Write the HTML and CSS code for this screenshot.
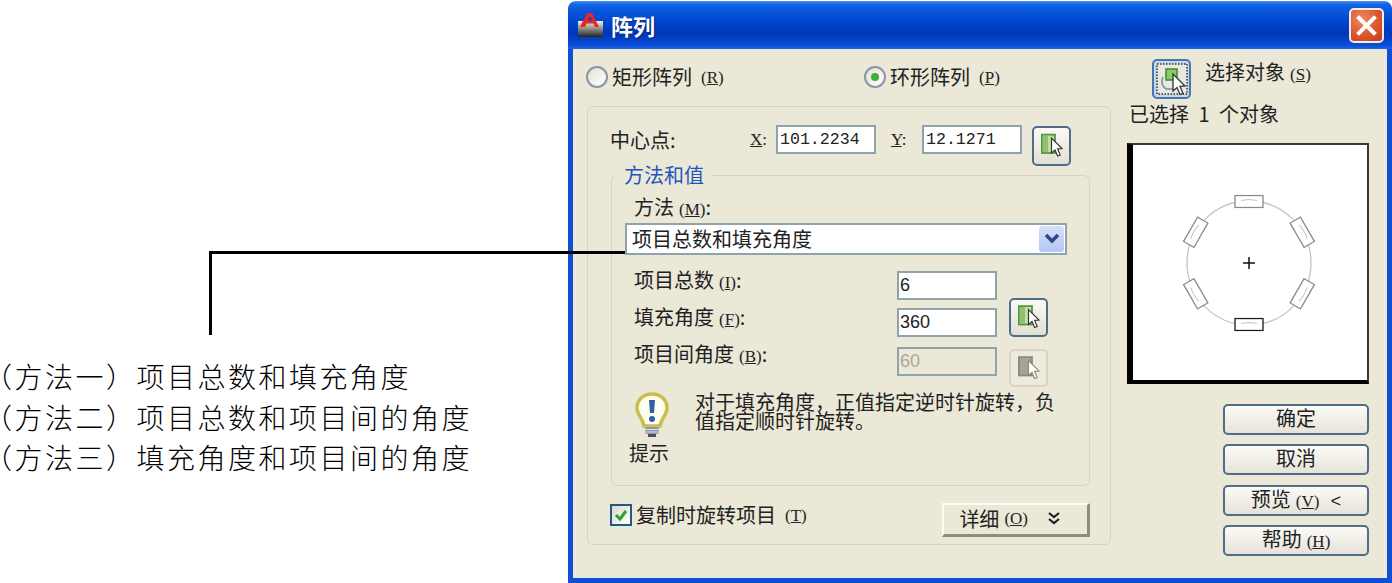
FILE: index.html
```html
<!DOCTYPE html>
<html lang="zh-CN">
<head>
    <meta charset="UTF-8">
    <title>阵列</title>
    <link rel="stylesheet" href="styles.css">
</head>
<body>
    <svg class="defs" width="0" height="0">
        <symbol id="pick" viewBox="0 0 40 40">
            <rect x="9" y="7" width="15" height="21" fill="#c5dda6" stroke="#4f9638" stroke-width="2"/>
            <rect x="10" y="8" width="6" height="19" fill="#93c06e"/>
            <path d="M20 11v17l4-3.500 3 7 3-1.200-3-7 5-.3z" fill="#fff" stroke="#333" stroke-width="1.300"/>
        </symbol>
        <symbol id="pick-off" viewBox="0 0 40 40">
            <rect x="9" y="7" width="15" height="21" fill="#a8a294" stroke="#8d887a" stroke-width="2"/>
            <path d="M20 11v17l4-3.500 3 7 3-1.200-3-7 5-.3z" fill="#fff" stroke="#8d887a" stroke-width="1.300"/>
        </symbol>
        <symbol id="item" viewBox="-15 -7 30 14">
            <rect x="-14" y="-6" width="28" height="12" fill="#fff" stroke="currentColor" stroke-width="1.300"/>
            <path d="M-8 -1Q0 -3 8 -1" fill="none" stroke="#c4c4c4"/>
        </symbol>
    </svg>

    <div class="leader"></div>

    <div class="notes">
        <p>（方法一）项目总数和填充角度</p>
        <p>（方法二）项目总数和项目间的角度</p>
        <p>（方法三）填充角度和项目间的角度</p>
    </div>

    <div class="window">
        <div class="title-bar">
            <div class="title">
                <svg class="app-icon" width="27" height="26" viewBox="0 0 27 26">
                    <defs>
                        <linearGradient id="iconFade" x1="0" y1="0" x2="0" y2="1">
                            <stop offset="0" stop-color="#f4f0e4"/>
                            <stop offset="1" stop-color="#23231f"/>
                        </linearGradient>
                    </defs>
                    <rect x="1" y="9" width="25" height="16" fill="url(#iconFade)"/>
                    <path d="M3 15 10 1h5l7 14h-4l-1.500-3.500h-7L8 15zM11 8.500h4l-2-4.500z" fill="#e5232a" fill-rule="evenodd"/>
                </svg>
                <span>阵列</span>
            </div>
            <button class="close-btn" aria-label="关闭">
                <svg width="23" height="23" viewBox="0 0 23 23"><path d="M4 4l15 15M19 4 4 19" stroke="#fff" stroke-width="4" stroke-linecap="square"/></svg>
            </button>
        </div>

        <div class="client">
            <div class="main">
                <div class="radio-row">
                    <label class="radio-item"><span class="radio"></span>矩形阵列<span class="key">(<u>R</u>)</span></label>
                    <label class="radio-item"><span class="radio on"></span>环形阵列<span class="key">(<u>P</u>)</span></label>
                </div>

                <div class="group">
                    <div class="center-row">
                        <span class="center-label">中心点:</span>
                        <span class="axis axis-x"><u>X</u>:</span>
                        <input class="field mono" type="text" value="101.2234">
                        <span class="axis axis-y"><u>Y</u>:</span>
                        <input class="field mono" type="text" value="12.1271">
                        <button class="pick-btn center-pick"><svg width="36" height="36"><use href="#pick"/></svg></button>
                    </div>

                    <fieldset class="method">
                        <legend>方法和值</legend>
                        <div class="method-label">方法<span class="key">(<u>M</u>)</span>:</div>
                        <div class="combo">
                            <span>项目总数和填充角度</span>
                            <span class="combo-arrow">
                                <svg width="16" height="12" viewBox="0 0 16 12"><path d="M2 2l6 6 6-6" fill="none" stroke="#2b4a86" stroke-width="3.500"/></svg>
                            </span>
                        </div>

                        <div class="value-grid">
                            <span class="value-label">项目总数<span class="key">(<u>I</u>)</span>:</span>
                            <input class="field" type="text" value="6">
                            <span class="value-label">填充角度<span class="key">(<u>F</u>)</span>:</span>
                            <input class="field" type="text" value="360">
                            <button class="pick-btn fill-pick"><svg width="35" height="35"><use href="#pick"/></svg></button>
                            <span class="value-label">项目间角度<span class="key">(<u>B</u>)</span>:</span>
                            <input class="field" type="text" value="60" disabled>
                            <button class="pick-btn off-pick" disabled><svg width="35" height="35"><use href="#pick-off"/></svg></button>
                        </div>

                        <div class="tip">
                            <div class="tip-side">
                                <svg class="bulb" width="34" height="46" viewBox="0 0 34 46">
                                    <path d="M17 2C8 2 2 8 2 16c0 7 6 10 7 18h16c1-8 7-11 7-18C32 8 26 2 17 2z" fill="#fffef0" stroke="#c9bd4e" stroke-width="3.500"/>
                                    <path d="M14 8h6l-1 13h-4z" fill="#2f5fa8"/>
                                    <circle cx="17" cy="27" r="3" fill="#2f5fa8"/>
                                    <rect x="10" y="35" width="14" height="7" rx="2" fill="#8f97a8"/>
                                    <path d="M10 37.500h14M10 40h14" stroke="#dfe2ea"/>
                                    <rect x="13" y="42" width="8" height="3" fill="#4a4f60"/>
                                </svg>
                                <span class="tip-label">提示</span>
                            </div>
                            <p class="tip-text">对于填充角度，正值指定逆时针旋转，负值指定顺时针旋转。</p>
                        </div>
                    </fieldset>

                    <div class="bottom-row">
                        <label class="check-item">
                            <span class="check">
                                <svg width="18" height="18" viewBox="0 0 18 18"><path d="M4 9l4 4 6-8" fill="none" stroke="#2aa22e" stroke-width="3"/></svg>
                            </span>
                            复制时旋转项目<span class="key">(<u>T</u>)</span>
                        </label>
                        <button class="more-btn">
                            详细<span class="key">(<u>O</u>)</span>
                            <svg class="more-icon" width="14" height="14" viewBox="0 0 14 14"><path d="M2 2l5 4 5-4M2 8l5 4 5-4" fill="none" stroke="#222" stroke-width="2.200"/></svg>
                        </button>
                    </div>
                </div>
            </div>

            <div class="side">
                <div class="select-row">
                    <button class="select-btn">
                        <svg width="34" height="34" viewBox="0 0 34 34">
                            <rect x="2" y="2" width="30" height="30" fill="#e6e8e2" stroke="#333" stroke-width="1.500" stroke-dasharray="1.500 1.500"/>
                            <path d="M8 15a9 9 0 0 0 3 12h8" fill="none" stroke="#888" stroke-width="1.500"/>
                            <rect x="11" y="7" width="11" height="11" fill="#8ecb62" stroke="#3c8a2e" stroke-width="1.500"/>
                            <path d="M18 12v17l4-3.500 3 7 3-1.200-3-7 5-.3z" fill="#fff" stroke="#333" stroke-width="1.300"/>
                        </svg>
                    </button>
                    <span class="select-label">选择对象<span class="key">(<u>S</u>)</span></span>
                </div>
                <div class="selected-count">已选择 1 个对象</div>

                <div class="preview">
                    <svg width="234" height="235" viewBox="0 0 234 235">
                        <circle cx="116" cy="118" r="62" fill="none" stroke="#c6c6c6" stroke-width="1.300"/>
                        <path d="M110 118h12M116 112v12" stroke="#111" stroke-width="1.500"/>
                        <g class="item-gray">
                            <use href="#item" x="101" y="49.500" width="30" height="14"/>
                            <use href="#item" x="101" y="49.500" width="30" height="14" transform="rotate(60 116 118)"/>
                            <use href="#item" x="101" y="49.500" width="30" height="14" transform="rotate(120 116 118)"/>
                            <use href="#item" x="101" y="49.500" width="30" height="14" transform="rotate(240 116 118)"/>
                            <use href="#item" x="101" y="49.500" width="30" height="14" transform="rotate(300 116 118)"/>
                        </g>
                        <use class="item-black" href="#item" x="101" y="172.500" width="30" height="14"/>
                    </svg>
                </div>

                <div class="actions">
                    <button class="action-btn">确定</button>
                    <button class="action-btn">取消</button>
                    <button class="action-btn">预览<span class="key">(<u>V</u>)</span><span class="preview-arrow">&lt;</span></button>
                    <button class="action-btn">帮助<span class="key">(<u>H</u>)</span></button>
                </div>
            </div>
        </div>
    </div>
</body>
</html>
```

FILE: styles.css
```css
* {
    margin: 0;
    padding: 0;
    box-sizing: border-box;
}

body {
    display: flex;
    position: relative;
    width: 1392px;
    height: 583px;
    overflow: hidden;
    background: #fff;
    color: #222;
    font-family: "Noto Sans CJK SC", sans-serif;
    font-size: 20px;
    line-height: 24px;
}

button, input {
    font-family: inherit;
    font-size: inherit;
    color: inherit;
}

.defs {
    position: absolute;
}

/* leader line runs over the dialog up to the combo box */
.leader {
    position: absolute;
    top: 251px;
    left: 209px;
    z-index: 2;
    width: 416px;
    height: 84px;
    border-top: 3px solid #000;
    border-left: 3px solid #000;
}

.notes {
    flex: 0 0 568px;
    padding-top: 356px;
    color: #000;
    font-size: 28px;
    font-weight: 300;
    line-height: 40.5px;
    letter-spacing: 2.5px;
    white-space: nowrap;
}

.notes p {
    margin-left: -16px;
}

.window {
    display: flex;
    flex-direction: column;
    flex: 0 0 824px;
    height: 582px;
    margin-top: 1px;
    padding: 0 5px 5px;
    border-radius: 8px 8px 0 0;
    background: linear-gradient(#4a92f2 0, #1566e6 3px, #0a58dc 9px, #0047d0 20px, #0036b8 33px, #0a4ed6 44px, #1a62e8 48px) top / 100% 48px no-repeat, #0f4fd4;
}

.title-bar {
    display: flex;
    justify-content: space-between;
    align-items: center;
    flex: 0 0 48px;
    padding-right: 3px;
}

.title {
    display: flex;
    align-items: center;
    gap: 7px;
    padding-left: 4px;
    color: #fff;
    font-size: 22px;
    font-weight: 700;
    text-shadow: 1px 1px 1px #0a2a80;
}

.close-btn {
    display: flex;
    justify-content: center;
    align-items: center;
    width: 35px;
    height: 35px;
    border: 2px solid #f2ece6;
    border-radius: 5px;
    background: radial-gradient(circle at 35% 30%, #ee8a5e, #d9542a 60%, #bf3d18);
}

.client {
    display: flex;
    flex: 1;
    background: #ebe8d8;
}

.main {
    flex: 0 0 524px;
    margin-left: 14px;
    padding-top: 17px;
}

.radio-row {
    display: flex;
    height: 22px;
    margin: 0 0 18px -1px;
}

.radio-item {
    display: flex;
    align-items: center;
    gap: 4px;
    white-space: nowrap;
}

.radio-item:first-child {
    width: 278px;
}

.radio {
    position: relative;
    width: 22px;
    height: 22px;
    border: 2px solid #8796a2;
    border-radius: 50%;
    background: linear-gradient(135deg, #e2e0d6, #fff);
}

.radio.on::after {
    content: "";
    position: absolute;
    top: 5px;
    left: 5px;
    width: 8px;
    height: 8px;
    border-radius: 50%;
    background: #3fae3a;
}

.key {
    margin-left: 5px;
    font-family: "Liberation Serif", serif;
    font-size: 17px;
    line-height: 1;
}

.group {
    height: 439px;
    padding: 18px 20px 0 23px;
    border: 1px solid #d8d4c4;
    border-radius: 6px;
}

.center-row {
    display: flex;
    height: 38px;
}

.center-label {
    width: 140px;
    margin-left: -1px;
    line-height: 30px;
}

.axis {
    font-family: "Liberation Serif", serif;
    font-size: 17px;
    line-height: 30px;
}

.axis-x {
    width: 26px;
}

.axis-y {
    width: 31px;
    margin-left: 15px;
}

.field {
    width: 100px;
    height: 29px;
    padding-left: 1px;
    border: 2px solid #8fa3ad;
    background: #fff;
    font-family: "Liberation Sans", sans-serif;
    font-size: 18px;
}

.field.mono {
    padding-left: 2px;
    font-family: "Liberation Mono", monospace;
    font-size: 16.6px;
}

.field:disabled {
    background: #ebe8d8;
    color: #aca899;
}

.pick-btn {
    display: flex;
    justify-content: center;
    align-items: center;
    width: 39px;
    height: 39px;
    border: 2px solid #4f6d88;
    border-radius: 5px;
    background: linear-gradient(#faf9f5, #e2dfd2);
}

.center-pick {
    margin: 1px 0 0 10px;
    height: 40px;
}

.method {
    width: 479px;
    height: 323px;
    padding: 0 13px;
    border: 1px solid #d8d4c4;
    border-radius: 6px;
    background: #ebe8d8;
}

.method legend {
    margin-left: -9px;
    padding: 0 8px;
    color: #1f55c0;
}

.method-label {
    margin: 8px 0 4px 9px;
}

.combo {
    display: flex;
    justify-content: space-between;
    align-items: center;
    width: 442px;
    height: 32px;
    padding: 0 1px 0 5px;
    border: 2px solid #8fa3ad;
    background: #fff;
}

.combo-arrow {
    display: flex;
    justify-content: center;
    align-items: center;
    width: 25px;
    height: 26px;
    border-radius: 3px;
    background: linear-gradient(#d6e0fb, #b4c6f5);
}

.value-grid {
    display: grid;
    grid-template-columns: 251px 100px 39px;
    grid-template-rows: 29px 29px 29px;
    column-gap: 12px;
    row-gap: 8px;
    margin: 16px 0 0 9px;
}

.value-grid .field:disabled {
    margin-top: 2px;
}

.value-label {
    grid-column: 1;
    margin-top: -3px;
}

.fill-pick {
    grid-column: 3;
    grid-row: 1 / 3;
    align-self: end;
}

.off-pick {
    grid-column: 3;
    grid-row: 3;
    height: 38px;
    margin-top: 4px;
    border-color: #d8d5c8;
    background: #eeebde;
}

.tip {
    display: flex;
    margin-top: 18px;
}

.tip-side {
    display: flex;
    flex-direction: column;
    flex: 0 0 70px;
    padding-left: 4px;
}

.bulb {
    margin-left: 6px;
}

.tip-label {
    margin-top: 3px;
}

.tip-text {
    width: 362px;
    line-height: 19px;
}

.bottom-row {
    display: flex;
    justify-content: space-between;
    width: 480px;
    margin: 17px 0 0 -1px;
}

.check-item {
    display: flex;
    align-items: center;
    gap: 4px;
    height: 24px;
    white-space: nowrap;
}

.check {
    display: flex;
    justify-content: center;
    align-items: center;
    width: 22px;
    height: 22px;
    border: 2px solid #1f5a86;
    background: linear-gradient(135deg, #dcdacb, #fff);
}

.more-btn {
    display: flex;
    align-items: center;
    justify-content: flex-end;
    width: 148px;
    height: 34px;
    padding: 0 26px 3px 0;
    border: 0;
    border-top: 2px solid #fbfaf5;
    border-left: 2px solid #fbfaf5;
    border-right: 3px solid #8f8c7c;
    border-bottom: 3px solid #8f8c7c;
    background: #ebe8d8;
}

.more-icon {
    margin-left: 19px;
}

.side {
    flex: 0 0 242px;
    margin-left: 16px;
    padding-top: 10px;
}

.select-row {
    display: flex;
    height: 40px;
    margin-left: 25px;
}

.select-btn {
    display: flex;
    justify-content: center;
    align-items: center;
    width: 39px;
    height: 40px;
    border: 2px solid #4a76b0;
    border-radius: 5px;
    background: #c6d6ea;
}

.select-label {
    margin-left: 14px;
    line-height: 26px;
}

.selected-count {
    margin: 3px 0 0 2px;
    word-spacing: 5px;
}

.preview {
    width: 242px;
    height: 241px;
    margin-top: 17px;
    border-top: 2px solid #3a3a30;
    border-right: 2px solid #3a3a30;
    border-bottom: 4px solid #000;
    border-left: 6px solid #000;
    background: #fff;
}

.preview svg {
    display: block;
}

.item-gray {
    color: #8a8a8a;
}

.item-black {
    color: #1a1a1a;
}

.actions {
    display: flex;
    flex-direction: column;
    gap: 9.33px;
    margin: 20px 0 0 96px;
}

.action-btn {
    width: 146px;
    height: 31px;
    padding-bottom: 3px;
    border: 2px solid #4f6d88;
    border-radius: 5px;
    background: linear-gradient(#fbfaf6, #e6e3d8);
    line-height: 24px;
}

.preview-arrow {
    margin-left: 11px;
    font-family: "Liberation Mono", monospace;
    font-size: 18px;
}
```
